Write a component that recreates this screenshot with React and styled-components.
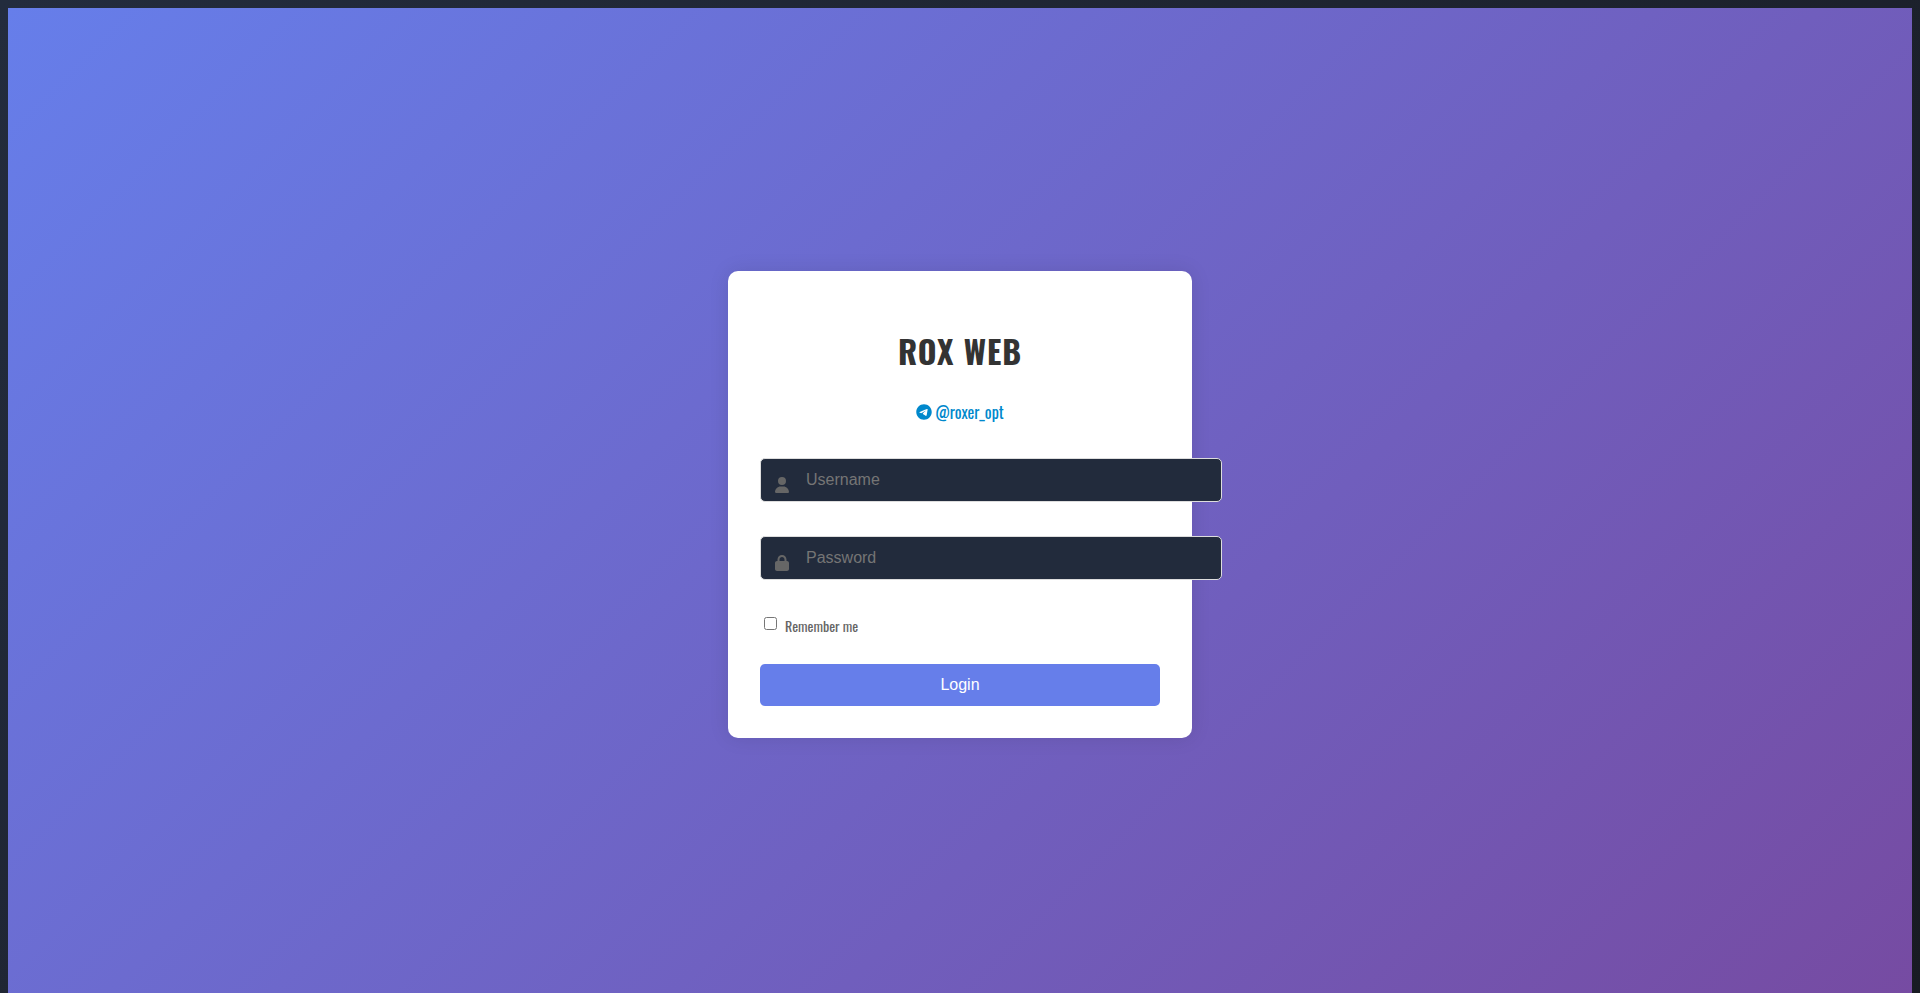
import React from "react";
import styled, { createGlobalStyle } from "styled-components";
import { FaLock, FaTelegram, FaUser } from "react-icons/fa6";

function Field({ id, label, type, icon }) {
  return (
    <FieldWrap>
      <Input id={id} name={id} type={type} placeholder={label} aria-label={label} />
      <FieldIcon htmlFor={id}>{icon}</FieldIcon>
    </FieldWrap>
  );
}

function App() {
  return (
    <>
      <GlobalStyle />
      <Page>
        <Card onSubmit={(e) => e.preventDefault()}>
          <Title>ROX WEB</Title>
          <Contact>
            <a href="#">
              <FaTelegram />
              @roxer_opt
            </a>
          </Contact>
          <Field id="username" label="Username" type="text" icon={<FaUser />} />
          <Field id="password" label="Password" type="password" icon={<FaLock />} />
          <Remember>
            <input type="checkbox" id="remember" />
            <label htmlFor="remember">Remember me</label>
          </Remember>
          <LoginButton type="submit">Login</LoginButton>
        </Card>
      </Page>
    </>
  );
}

export default App;

const GlobalStyle = createGlobalStyle`
  body {
    margin: 8px 8px 0;
    background: linear-gradient(135deg, #232c3d 0%, #181b23 100%);
    font-family: Oswald, "Liberation Sans Narrow", "Liberation Sans", sans-serif;
  }
`;

const Page = styled.main`
  min-height: 100vh;
  display: flex;
  justify-content: center;
  align-items: center;
  background: linear-gradient(135deg, #667eea 0%, #764ba2 100%);
`;

const Card = styled.form`
  width: 100%;
  max-width: 400px;
  padding: 32px;
  background: white;
  border-radius: 10px;
  box-shadow: 0 0 20px rgba(0, 0, 0, 0.1);
`;

const Title = styled.h1`
  margin: 24px 0;
  color: #333;
  font-size: 32px;
  font-weight: 700;
  letter-spacing: 1px;
  line-height: 48px;
  text-align: center;
`;

const Contact = styled.div`
  display: flex;
  justify-content: center;
  margin-bottom: 33px;
  a {
    display: flex;
    align-items: center;
    gap: 3px;
    color: #0088cc;
    font-size: 16px;
    line-height: 26px;
    text-decoration: none;
  }
`;

const FieldWrap = styled.div`
  position: relative;
  display: flex;
  margin-bottom: 34px;
`;

// content-box on purpose, the field runs past the right edge of the card
const Input = styled.input`
  box-sizing: content-box;
  flex: none;
  width: 100%;
  height: 18px;
  padding: 12px 15px 12px 45px;
  background: #222b3c;
  border: 1px solid #ddd;
  border-radius: 5px;
  color: white;
  font-family: "Liberation Sans", Arial, sans-serif;
  font-size: 16px;
  &::placeholder {
    color: #757575;
  }
`;

const FieldIcon = styled.label`
  position: absolute;
  top: 19px;
  left: 15px;
  display: flex;
  color: #666;
  svg {
    width: 14px;
    height: 16px;
  }
`;

const Remember = styled.div`
  display: flex;
  align-items: flex-start;
  gap: 5px;
  margin-bottom: 26px;
  input {
    margin: 3px 3px 3px 4px;
  }
  label {
    color: #666;
    font-size: 14px;
    line-height: 24px;
  }
`;

const LoginButton = styled.button`
  display: block;
  width: 100%;
  height: 42px;
  background: #667eea;
  border: none;
  border-radius: 5px;
  color: white;
  cursor: pointer;
  font-family: "Liberation Sans", Arial, sans-serif;
  font-size: 16px;
`;
